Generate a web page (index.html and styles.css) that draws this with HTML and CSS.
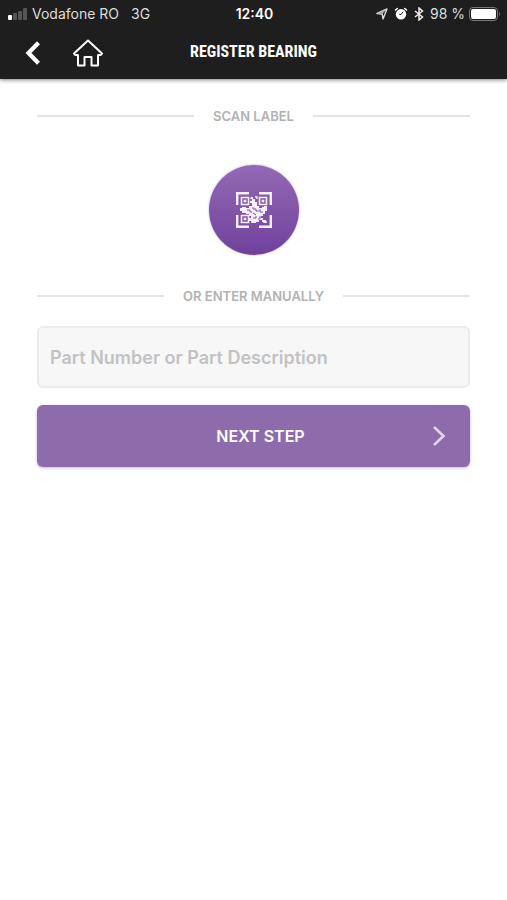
FILE: index.html
```html
<!DOCTYPE html>
<html lang="en">
<head>
    <meta charset="UTF-8">
    <meta name="viewport" content="width=device-width, initial-scale=1.0">
    <title>Register Bearing</title>
    <link rel="stylesheet" href="styles.css">
</head>
<body>
    <header class="top">
        <div class="status">
            <div class="status-left">
                <svg class="signal" width="20" height="12" viewBox="0 0 20 12">
                    <rect x="0" y="7" width="4" height="5" rx="1" fill="#fff"/>
                    <rect x="5" y="5" width="4" height="7" rx="1" fill="#555"/>
                    <rect x="10" y="3" width="4" height="9" rx="1" fill="#555"/>
                    <rect x="15" y="0" width="4" height="12" rx="1" fill="#555"/>
                </svg>
                <span>Vodafone RO</span>
                <span class="network">3G</span>
            </div>
            <span class="time">12:40</span>
            <div class="status-right">
                <svg width="12" height="12" viewBox="0 0 12 12">
                    <path d="M11 1 L7 11 L6.2 6 L1 5.5 Z" fill="none" stroke="#ddd" stroke-width="1.4" stroke-linejoin="round"/>
                    <path d="M11 1 L6.2 6 L1 5.5 Z" fill="#aaa"/>
                </svg>
                <svg class="alarm" width="14" height="14" viewBox="0 0 14 14">
                    <circle cx="7" cy="7.3" r="5.2" fill="#fff"/>
                    <path d="M1.5 3 L3.3 1.5 M12.5 3 L10.7 1.5" stroke="#fff" stroke-width="1.6" stroke-linecap="round"/>
                    <path d="M9 4.8 L7 7.6 L5.2 7.2" fill="none" stroke="#1e1e1e" stroke-width="1"/>
                </svg>
                <svg class="bluetooth" width="10" height="14" viewBox="0 0 10 14">
                    <path d="M1 4 L8.5 10 L5 13 V1 L8.5 4 L1 10" fill="none" stroke="#eee" stroke-width="1.5"/>
                </svg>
                <span>98 %</span>
                <svg class="battery" width="32" height="14" viewBox="0 0 32 14">
                    <rect x="0.5" y="0.5" width="28" height="13" rx="3.5" fill="none" stroke="#777"/>
                    <rect x="2" y="2" width="25" height="10" rx="2" fill="#fff"/>
                    <path d="M30 5 Q32 7 30 9 Z" fill="#777"/>
                </svg>
            </div>
        </div>
        <nav class="nav">
            <div class="nav-left">
                <button type="button" class="icon-btn" aria-label="Back">
                    <svg width="16" height="24" viewBox="0 0 16 24">
                        <path d="M14.5 1.8 L4.5 12 L14.5 22.2" fill="none" stroke="#fff" stroke-width="4.2"/>
                    </svg>
                </button>
                <a href="#" class="icon-btn" aria-label="Home">
                    <svg width="32" height="28" viewBox="0 0 32 28">
                        <path d="M16 1.5 L30 14.5 L28.7 16 H26 V26.5 H19.5 V18 H12.5 V26.5 H6 V16 H3.3 L2 14.5 Z" fill="none" stroke="#fff" stroke-width="2" stroke-linejoin="round"/>
                    </svg>
                </a>
            </div>
            <h1 class="title">REGISTER BEARING</h1>
        </nav>
    </header>
    <main>
        <form class="register">
            <h2 class="divider">SCAN LABEL</h2>
            <button type="button" class="scan" aria-label="Scan label">
                <svg width="36" height="36" viewBox="0 0 36 36" fill="none" stroke="#f6eefc">
                    <path d="M1.2 13 V1.2 H13 M23 1.2 H34.8 V13 M34.8 23 V34.8 H23 M13 34.8 H1.2 V23" stroke-width="2.4"/>
                    <path d="M5.5 5.5 H12.5 V12.5 H5.5 Z M23.5 5.5 H30.5 V12.5 H23.5 Z M5.5 23.5 H12.5 V30.5 H5.5 Z" stroke-width="1.6"/>
                    <path d="M7.7 7.7 h2.6 v2.6 h-2.6 z M25.7 7.7 h2.6 v2.6 h-2.6 z M7.7 25.7 h2.6 v2.6 h-2.6 z" fill="#f6eefc" stroke="none"/>
                    <path d="M15 5 h2 v2 h2 v3 h2 v4 h2 v2 h3 v-1 h2 v-1 h3 v5 h-2 v3 h-2 v2 h-2 v2 h2 v2 h3 v3 h-2 v-1 h-2 v-2 h-3 v2 h-3 v1 h-4 v-2 h-3 v-3 h2 v-2 h-2 v-2 h-3 v-1 h-4 v-2 h-2 v-3 h2 v-1 h4 v1 h3 v-2 h3 v-3 h-2 v-2 h2 v-2 h-2 z" fill="#f6eefc" stroke="none"/>
                    <path d="M19 5 h2 v2 M27 30 h4 M15 30 h2" stroke-width="1.4"/>
                    <path d="M11 18 h3 v2 h2 M17 15 v2 h3 v2 h3 M17 21 l3 2 M24 17 v3 h3 M17 26 h3 v-2 M22 27 h2 v-3" stroke="#8052aa" stroke-width="1"/>
                </svg>
            </button>
            <label class="divider" for="part">OR ENTER MANUALLY</label>
            <input type="text" id="part" class="part" placeholder="Part Number or Part Description">
            <button type="submit" class="next">
                <span class="next-text">NEXT STEP</span>
                <svg class="chevron" width="14" height="22" viewBox="0 0 14 22">
                    <path d="M2 2 L11.5 11 L2 20" fill="none" stroke="#e1d3ec" stroke-width="2.6"/>
                </svg>
            </button>
        </form>
    </main>
</body>
</html>
```
FILE: styles.css
```css
* {
    box-sizing: border-box;
}
body {
    margin: 0;
    background: #fff;
    font-family: Inter, "Liberation Sans", sans-serif;
}
button {
    border: none;
    cursor: pointer;
    font-family: inherit;
}
svg {
    display: block;
}
.top {
    background: #1e1e1e;
    color: #fff;
    box-shadow: 0 1px 4px rgba(0, 0, 0, 0.5);
}
.status {
    display: grid;
    grid-template-columns: 1fr auto 1fr;
    align-items: center;
    height: 27px;
    padding: 0 6px 0 8px;
    font-size: 14px;
    color: #ddd;
}
.status-left, .status-right {
    display: flex;
    align-items: center;
    gap: 4px;
}
.status-right {
    justify-content: flex-end;
}
.network {
    margin-left: 8px;
}
.time {
    color: #fff;
    font-weight: 600;
}
.alarm {
    margin: 0 2px;
}
.bluetooth {
    margin-right: 2px;
}
.nav {
    display: grid;
    grid-template-columns: 1fr auto 1fr;
    align-items: center;
    height: 52px;
    padding: 0 24px;
}
.nav-left {
    display: flex;
    align-items: center;
    gap: 32px;
}
.icon-btn {
    padding: 0;
    background: none;
}
.title {
    margin: 0;
    padding-bottom: 4px;
    font-family: "Liberation Sans Narrow", "Roboto Condensed", "Open Sans Condensed", "Liberation Sans", sans-serif;
    font-size: 16px;
    font-weight: bold;
}
.register {
    display: flex;
    flex-direction: column;
    padding: 27px 37px;
}
.divider {
    display: flex;
    align-items: center;
    gap: 19px;
    margin: 0;
    font-size: 13px;
    font-weight: 600;
    line-height: 20px;
    color: #b2b2b2;
}
.divider::before, .divider::after {
    content: "";
    flex: 1;
    height: 2px;
    background: #e4e4e4;
}
.scan {
    display: flex;
    align-items: center;
    justify-content: center;
    align-self: center;
    width: 90px;
    height: 90px;
    margin: 39px 0 31px;
    padding: 0;
    border-radius: 50%;
    background: linear-gradient(#9469b5, #70419c);
    box-shadow: 0 0 2px rgba(112, 65, 156, 0.6);
}
.part {
    width: 100%;
    height: 62px;
    margin: 20px 0 17px;
    padding: 0 11px;
    border: 2px solid #ececec;
    border-radius: 6px;
    background: #f7f7f7;
    font-family: inherit;
    font-size: 18px;
    font-weight: 600;
    color: #555;
}
.part::placeholder {
    color: #c2c2c4;
    opacity: 1;
}
.next {
    display: grid;
    grid-template-columns: 1fr auto 1fr;
    align-items: center;
    width: 100%;
    height: 62px;
    padding: 0 24px 0 38px;
    border-radius: 6px;
    background: #8e6cac;
    box-shadow: 0 1px 3px rgba(142, 108, 172, 0.5);
    color: #fff;
    font-size: 16px;
    font-weight: 600;
}
.next-text {
    grid-column: 2;
}
.chevron {
    justify-self: end;
}
```
